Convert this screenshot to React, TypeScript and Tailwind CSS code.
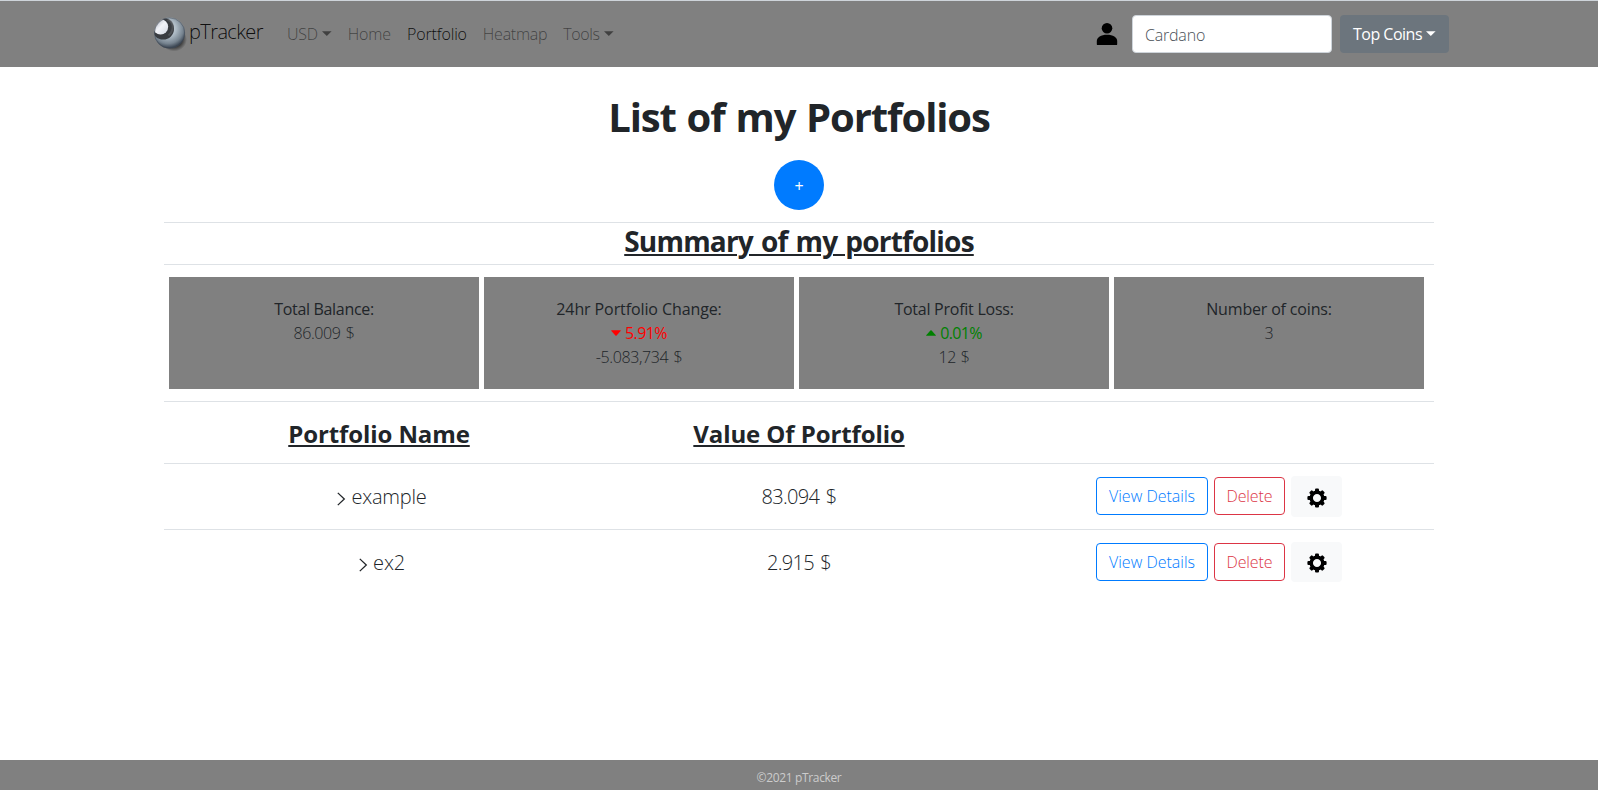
import type { ReactNode } from "react";

function Caret() {
  return (
    <svg className="ml-1 inline-block h-[5px] w-[10px] align-[4px]" viewBox="0 0 10 5" fill="currentColor" aria-hidden="true">
      <path d="M0 .2h9.6L4.8 4.9z" />
    </svg>
  );
}

function Logo() {
  return (
    <svg className="h-[38px] w-[36px] shrink-0" viewBox="0 0 36 38" aria-hidden="true">
      <defs>
        <radialGradient id="ball" cx="0.45" cy="0.35" r="0.62">
          <stop offset="0" stopColor="#dfe6ec" />
          <stop offset="0.45" stopColor="#aab7c2" />
          <stop offset="0.8" stopColor="#76838f" />
          <stop offset="1" stopColor="#3f4a57" />
        </radialGradient>
        <radialGradient id="shade" cx="0.5" cy="0.5" r="0.5">
          <stop offset="0.55" stopColor="#000" stopOpacity="0.65" />
          <stop offset="1" stopColor="#000" stopOpacity="0" />
        </radialGradient>
        <linearGradient id="spot" x1="0" y1="0" x2="1" y2="1">
          <stop offset="0" stopColor="#a3a8b6" />
          <stop offset="0.5" stopColor="#f1f3f8" />
          <stop offset="1" stopColor="#d3d8e2" />
        </linearGradient>
        <clipPath id="ballClip">
          <circle cx="16.6" cy="18" r="15.2" />
        </clipPath>
      </defs>
      <ellipse cx="21" cy="24.5" rx="13" ry="12" fill="url(#shade)" />
      <circle cx="16.6" cy="18" r="15.4" fill="url(#ball)" />
      <g clipPath="url(#ballClip)">
        <circle cx="10.2" cy="13.8" r="10.8" fill="#393c41" />
        <path d="M14.5 4.5c4 2 6 5.5 5 9.5-.6 3-2 5-4 6.500" fill="none" stroke="#5d6066" strokeWidth="2" opacity=".6" />
        <circle cx="7.6" cy="11.8" r="7.6" fill="url(#spot)" />
      </g>
      <circle cx="16.6" cy="18" r="15.1" fill="none" stroke="#3b434d" strokeOpacity=".55" strokeWidth=".8" />
    </svg>
  );
}

function PersonIcon() {
  return (
    <svg className="h-[24px] w-[22px]" viewBox="0 0 22 24" fill="#000" aria-hidden="true">
      <circle cx="11" cy="6.2" r="5.3" />
      <path d="M1.7 23.1Q.8 23.1.8 22.2V19C.8 15.4 5 12.7 11 12.7S21.2 15.4 21.2 19v3.2q0 .9-.9.9z" />
    </svg>
  );
}

function GearIcon() {
  return (
    <svg className="h-[20px] w-[20px]" viewBox="-10 -10 20 20" aria-hidden="true">
      <circle r="5.8" fill="none" stroke="#000" strokeWidth="3.5" />
      <g fill="#000">
        <rect x="-2" y="-9.6" width="4" height="3.6" rx="1.1" />
        <rect x="-2" y="6" width="4" height="3.6" rx="1.1" />
        <rect x="-9.6" y="-2" width="3.6" height="4" rx="1.1" />
        <rect x="6" y="-2" width="3.6" height="4" rx="1.1" />
        <g transform="rotate(45)">
          <rect x="-2" y="-9.4" width="4" height="3.6" rx="1.1" />
          <rect x="-2" y="5.8" width="4" height="3.6" rx="1.1" />
          <rect x="-9.4" y="-2" width="3.6" height="4" rx="1.1" />
          <rect x="5.8" y="-2" width="3.6" height="4" rx="1.1" />
        </g>
      </g>
    </svg>
  );
}

function Trend({ up = false }: { up?: boolean }) {
  return (
    <svg className="h-[6px] w-[10px]" viewBox="0 0 10 6" fill="currentColor" aria-hidden="true">
      <path d={up ? "M.6 5.8Q-.2 5.6.4 4.9L4.4.6Q5 .1 5.6.6L9.6 4.9q.6.7-.2.9z" : "M.6.2Q-.2.4.4 1.1L4.4 5.4q.6.5 1.2 0L9.6 1.1Q10.2.4 9.4.2z"} />
    </svg>
  );
}

function Card({ title, children }: { title: ReactNode; children: ReactNode }) {
  return (
    <div className="h-[112px] w-[310px] bg-[#808080] pt-5 text-center leading-6">
      <div className="font-medium">{title}</div>
      {children}
    </div>
  );
}

function PortfolioRow({ name, value, gear }: { name: ReactNode; value: string; gear: string }) {
  return (
    <div className="grid h-[65px] grid-cols-[430px_410px_430px] text-center">
      <div className="flex justify-center pt-[18px] pl-[6px] text-xl leading-[30px]">
        <svg className="mt-[10px] mr-[5px] h-[14px] w-[9px]" viewBox="0 0 9 14" fill="none" stroke="#212529" strokeWidth="1.3" aria-hidden="true">
          <path d="M.8.9 7.3 7 .8 13.1" />
        </svg>
        <span className="tracking-[-0.2px]">{name}</span>
      </div>
      <div className="pt-[18px] text-xl leading-[30px] tracking-[-0.7px] [word-spacing:2px]">{value}</div>
      <div className="flex items-start justify-center gap-[6px] pt-[12px]">
        <button className="mt-px h-[38px] w-[112px] rounded-[4px] border border-[#007bff] text-[#007bff]">View Details</button>
        <button className="mt-px h-[38px] w-[71px] rounded-[4px] border border-[#dc3545] tracking-[-0.1px] text-[#dc3545]">Delete</button>
        <button className={"flex w-[51px] justify-center rounded-[4px] bg-[#f8f9fa] " + gear} aria-label="Settings">
          <GearIcon />
        </button>
      </div>
    </div>
  );
}

export default function App() {
  return (
    <div className="flex h-[790px] w-[1598px] flex-col bg-white font-['Open_Sans','Noto_Sans',sans-serif] text-base font-light text-[#212529]">
      <header className="flex h-[67px] items-center border-t border-[#ced4da] bg-[#808080] pr-[149px] pl-[153px]">
        <Logo />
        <span className="mb-[4px] w-[90px] text-xl leading-[30px] tracking-[-0.6px] text-black/90">pTracker</span>
        <nav className="flex leading-6 text-black/50">
          <a className="px-2 tracking-[-0.3px] whitespace-nowrap">USD<Caret /></a>
          <a className="px-2 tracking-[-0.1px]">Home</a>
          <a className="px-2 tracking-[-0.15px] text-black/90">Portfolio</a>
          <a className="px-2 tracking-[-0.25px]">Heatmap</a>
          <a className="px-2 tracking-[-0.4px] whitespace-nowrap">Tools<Caret /></a>
        </nav>
        <div className="ml-auto flex items-center">
          <PersonIcon />
          <div className="ml-[14px] flex h-[38px] w-[200px] items-center rounded-[4px] border border-[#ced4da] bg-white px-3 pt-px tracking-[-0.2px] text-[#495057]">
            Cardano
          </div>
          <button className="ml-2 flex h-[38px] w-[109px] items-center justify-center rounded-[4px] bg-[#6c757d] font-normal text-white">
            <span className="tracking-[-0.5px] whitespace-nowrap">Top Coins<Caret /></span>
          </button>
        </div>
      </header>

      <main className="mx-auto flex w-[1270px] grow flex-col">
        <h1 className="mt-[26px] text-center text-[40px] leading-[48px] font-bold tracking-[-1.1px] [word-spacing:1.5px]">List of my Portfolios</h1>
        <button className="mx-auto mt-[19px] flex h-[50px] w-[50px] items-center justify-center rounded-full bg-[#007bff] pt-px font-normal text-white">+</button>
        <h2 className="mt-3 h-[43px] border-y border-[#dee2e6] text-center text-[28px] leading-[36px] font-bold tracking-[-0.8px] underline decoration-2 underline-offset-2 [word-spacing:1.5px]">
          Summary of my portfolios
        </h2>
        <section className="mt-3 flex gap-[5px] pl-[5px]">
          <Card title={<span className="tracking-[-0.32px]">Total Balance:</span>}>
            <div className="tracking-[-0.4px] [word-spacing:1.5px]">86.009 $</div>
          </Card>
          <Card title={<span className="tracking-[-0.1px]">24hr Portfolio Change:</span>}>
            <div className="flex items-center justify-center gap-1 font-normal tracking-[-0.6px] text-[#ff0000]"><Trend />5.91%</div>
            <div className="tracking-[-0.4px] [word-spacing:1.5px]">-5.083,734 $</div>
          </Card>
          <Card title={<span className="tracking-[-0.25px]">Total Profit Loss:</span>}>
            <div className="flex items-center justify-center gap-1 font-normal tracking-[-0.7px] text-[#008000]"><Trend up />0.01%</div>
            <div className="tracking-[-0.4px] [word-spacing:1px]">12 $</div>
          </Card>
          <Card title={<span className="tracking-[-0.17px]">Number of coins:</span>}>
            <div>3</div>
          </Card>
        </section>
        <section className="mt-3 divide-y divide-[#dee2e6] border-t border-[#dee2e6]">
          <div className="grid h-[62px] grid-cols-[430px_410px_430px] pt-[14px] text-center text-2xl leading-9 font-bold tracking-[-0.1px]">
            <div className="underline decoration-2 underline-offset-2">Portfolio Name</div>
            <div className="underline decoration-2 underline-offset-2">Value Of Portfolio</div>
          </div>
          <div className="h-[66px]">
            <PortfolioRow name="example" value="83.094 $" gear="h-[41px] pt-[12px]" />
          </div>
          <PortfolioRow name="ex2" value="2.915 $" gear="h-[40px] pt-[11px]" />
        </section>
      </main>

      <footer className="h-[30px] bg-[#808080] pt-[9px] text-center text-xs leading-[18px] font-normal tracking-[-0.35px] text-[#cccccc]">
        ©2021 pTracker
      </footer>
    </div>
  );
}
